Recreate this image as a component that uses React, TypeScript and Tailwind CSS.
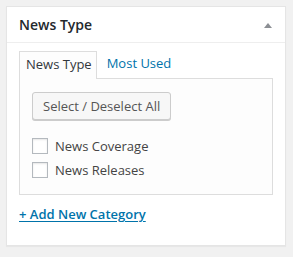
import { memo } from "react"

const categories = ["News Coverage", "News Releases"]

function Checkbox() {
	return (
		<span className="w-4 h-4 shrink-0 border border-[#b4b9be] bg-white shadow-[inset_0_1px_2px_rgba(0,0,0,0.1)]" />
	)
}

function NewsTypeBoxComponent() {
	return (
		<div
			className="w-[293px] h-[257px] bg-[#f1f1f1] pt-[6px] pl-[6px]"
			style={{ fontFamily: '"Open Sans", sans-serif' }}>
			<div className="w-[280px] bg-white border border-[#e5e5e5] shadow-[0_1px_1px_rgba(0,0,0,0.04)]">
				{/* Header */}
				<div className="h-[36px] border-b border-[#eeeeee] flex items-center justify-between pl-[12px] pr-[13px]">
					<span className="text-[14px] leading-[1.4] font-semibold text-[#23282d]">News Type</span>
					<svg width="8" height="5" viewBox="0 0 8 5" className="mt-[1px]">
						<path d="M4 0 L8 5 L0 5 Z" fill="#8c8f94" />
					</svg>
				</div>

				{/* Inside */}
				<div className="px-[12px] pt-[8px] pb-[22px]">
					{/* Tabs */}
					<div className="flex items-end text-[13px] leading-[18px]">
						<div className="relative z-10 -mb-px border border-b-0 border-[#dddddd] bg-[#fdfdfd] pl-[6px] pr-[4px] pt-[3px] pb-[6px] text-[#32373c]">
							News Type
						</div>
						<div className="ml-[10px] pt-[3px] pb-[6px] text-[#0073aa]">Most Used</div>
					</div>

					{/* Panel */}
					<div className="border border-[#dddddd] bg-[#fdfdfd] px-[12px] pt-[13px] pb-[12px]">
						<button className="h-[28px] px-[10px] rounded-[3px] border border-[#cccccc] bg-[#f7f7f7] shadow-[0_1px_0_#cccccc] text-[13px] leading-[26px] text-[#555555]">
							Select / Deselect All
						</button>
						<ul className="mt-[14px]">
							{categories.map((c) => (
								<li key={c} className="h-[24px] flex items-center gap-[7px] text-[13px] text-[#444444]">
									<Checkbox />
									<span className="pt-px">{c}</span>
								</li>
							))}
						</ul>
					</div>

					<a className="block mt-[10px] text-[13px] leading-[18px] font-semibold text-[#0073aa] underline underline-offset-[2px]">
						+ Add New Category
					</a>
				</div>
			</div>
		</div>
	)
}

const NewsTypeBox = memo(NewsTypeBoxComponent)

export default function App() {
	return <NewsTypeBox />
}
